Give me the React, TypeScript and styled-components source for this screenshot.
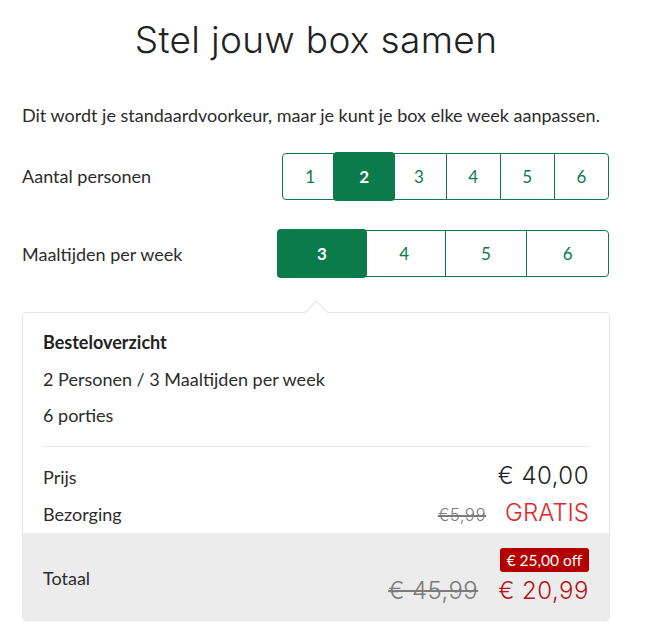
import React from "react";
import styled, { createGlobalStyle } from "styled-components";

const GREEN = "#0b7b4b";

const GlobalStyle = createGlobalStyle`
  html, body { margin: 0; padding: 0; background: #ffffff; }
  body { font-family: Lato, "Liberation Sans", sans-serif; color: #2c2c2c; }
  * { box-sizing: border-box; }
`;

const Page = styled.div`
  width: 650px;
  padding: 18px 0 0 22px;
`;

const Container = styled.div`
  width: 588px;
  display: flex;
  flex-direction: column;
`;

const Title = styled.h1`
  margin: 0;
  font-family: Inter, "Liberation Sans", sans-serif;
  font-weight: 300;
  font-size: 37px;
  line-height: 44px;
  letter-spacing: 0.35px;
  color: #222222;
  text-align: center;
`;

const Intro = styled.p`
  margin: 41px 0 0;
  font-size: 18px;
  line-height: 24px;
  color: #2c2c2c;
`;

const OptionRow = styled.div<{ $top: number }>`
  margin-top: ${(p) => p.$top}px;
  padding-right: 1px;
  display: flex;
  align-items: center;
  justify-content: space-between;
  height: 47px;
`;

const RowLabel = styled.span`
  font-size: 18px;
  line-height: 24px;
  color: #2c2c2c;
`;

const Segments = styled.div<{ $count: number; $width: number }>`
  width: ${(p) => p.$width}px;
  height: 47px;
  display: grid;
  grid-template-columns: repeat(${(p) => p.$count}, 1fr);
  border: 1px solid ${GREEN};
  border-radius: 4px;
`;

const Segment = styled.button<{ $active: boolean; $first: boolean }>`
  appearance: none;
  margin: ${(p) => (p.$active ? "-2px -4px" : "0")};
  padding: 0;
  border: none;
  border-left: ${(p) => (p.$first || p.$active ? "none" : `1px solid ${GREEN}`)};
  border-radius: ${(p) => (p.$active ? "4px" : "0")};
  background: ${(p) => (p.$active ? GREEN : "transparent")};
  color: ${(p) => (p.$active ? "#ffffff" : GREEN)};
  font-family: Lato, "Liberation Sans", sans-serif;
  font-size: 17px;
  font-weight: ${(p) => (p.$active ? 700 : 400)};
  position: relative;
  z-index: ${(p) => (p.$active ? 1 : 0)};
  cursor: pointer;
`;

const Card = styled.div`
  position: relative;
  margin-top: 35px;
  border: 1px solid #e4e4e4;
  border-radius: 4px;
  background: #ffffff;

  &::before {
    content: "";
    position: absolute;
    top: -9px;
    left: 285px;
    width: 16px;
    height: 16px;
    background: #ffffff;
    border-top: 1px solid #e4e4e4;
    border-left: 1px solid #e4e4e4;
    transform: rotate(45deg);
  }
`;

const Summary = styled.div`
  position: relative;
  padding: 11px 20px 1px;
`;

const SummaryTitle = styled.div`
  font-size: 18px;
  font-weight: 700;
  line-height: 36.6px;
  color: #222222;
`;

const SummaryLine = styled.div`
  font-size: 18px;
  line-height: 36.6px;
  color: #2c2c2c;
`;

const Divider = styled.hr`
  margin: 12px 0 11.6px;
  border: none;
  border-top: 1px solid #e6e6e6;
`;

const PriceRow = styled.div`
  display: flex;
  align-items: baseline;
  justify-content: space-between;
`;

const PriceLabel = styled.span`
  font-size: 18px;
  line-height: 36px;
  color: #2c2c2c;
`;

const PriceGroup = styled.span`
  display: flex;
  align-items: baseline;
  gap: 19px;
`;

const Amount = styled.span<{ $tone?: "normal" | "free" | "deal" }>`
  font-family: Inter, "Liberation Sans", sans-serif;
  font-weight: 300;
  font-size: 24px;
  line-height: 36px;
  letter-spacing: ${(p) => (p.$tone === "free" ? "0" : "0.5px")};
  color: ${(p) =>
    p.$tone === "free" ? "#e0272c" : p.$tone === "deal" ? "#b5121b" : "#222222"};
`;

const OldAmount = styled.span<{ $size: number }>`
  font-family: Inter, "Liberation Sans", sans-serif;
  font-weight: 300;
  font-size: ${(p) => p.$size}px;
  letter-spacing: 0.4px;
  color: #7b7b7b;
  text-decoration: line-through;
  text-decoration-thickness: ${(p) => (p.$size > 20 ? 2 : 1.5)}px;
`;

const Footer = styled.div`
  display: flex;
  align-items: center;
  justify-content: space-between;
  padding: 14.4px 20px 13.7px;
  background: #ececec;
  border-radius: 0 0 3px 3px;
`;

const TotalLabel = styled.span`
  padding-top: 2px;
  font-size: 18px;
  line-height: 24px;
  color: #2c2c2c;
`;

const TotalColumn = styled.div`
  display: flex;
  flex-direction: column;
  align-items: flex-end;
  gap: 4.6px;
`;

const Badge = styled.span`
  display: inline-flex;
  align-items: center;
  height: 24px;
  padding: 0 7px;
  background: #b30000;
  border-radius: 3px;
  color: #ffffff;
  font-size: 15.5px;
  line-height: 24px;
`;

const TotalPrices = styled.div`
  display: flex;
  align-items: baseline;
  gap: 20px;
  height: 30px;
  line-height: 30px;
`;

const DealAmount = styled(Amount)`
  line-height: 30px;
`;

const persons = [1, 2, 3, 4, 5, 6];
const meals = [3, 4, 5, 6];

export default function App() {
  const selectedPersons = 2;
  const selectedMeals = 3;
  return (
    <Page>
      <GlobalStyle />
      <Container>
        <Title>Stel jouw box samen</Title>
        <Intro>Dit wordt je standaardvoorkeur, maar je kunt je box elke week aanpassen.</Intro>

        <OptionRow $top={25.6}>
          <RowLabel>Aantal personen</RowLabel>
          <Segments $count={persons.length} $width={327}>
            {persons.map((n, i) => (
              <Segment key={n} $first={i === 0} $active={n === selectedPersons}>
                {n}
              </Segment>
            ))}
          </Segments>
        </OptionRow>

        <OptionRow $top={30.5}>
          <RowLabel>Maaltijden per week</RowLabel>
          <Segments $count={meals.length} $width={329}>
            {meals.map((n, i) => (
              <Segment key={n} $first={i === 0} $active={n === selectedMeals}>
                {n}
              </Segment>
            ))}
          </Segments>
        </OptionRow>

        <Card>
          <Summary>
            <SummaryTitle>Besteloverzicht</SummaryTitle>
            <SummaryLine>2 Personen / 3 Maaltijden per week</SummaryLine>
            <SummaryLine>6 porties</SummaryLine>
            <Divider />
            <PriceRow>
              <PriceLabel>Prijs</PriceLabel>
              <Amount>€ 40,00</Amount>
            </PriceRow>
            <PriceRow>
              <PriceLabel>Bezorging</PriceLabel>
              <PriceGroup>
                <OldAmount $size={17}>€5,99</OldAmount>
                <Amount $tone="free">GRATIS</Amount>
              </PriceGroup>
            </PriceRow>
          </Summary>
          <Footer>
            <TotalLabel>Totaal</TotalLabel>
            <TotalColumn>
              <Badge>€ 25,00 off</Badge>
              <TotalPrices>
                <OldAmount $size={24}>€ 45,99</OldAmount>
                <DealAmount $tone="deal">€ 20,99</DealAmount>
              </TotalPrices>
            </TotalColumn>
          </Footer>
        </Card>
      </Container>
    </Page>
  );
}
